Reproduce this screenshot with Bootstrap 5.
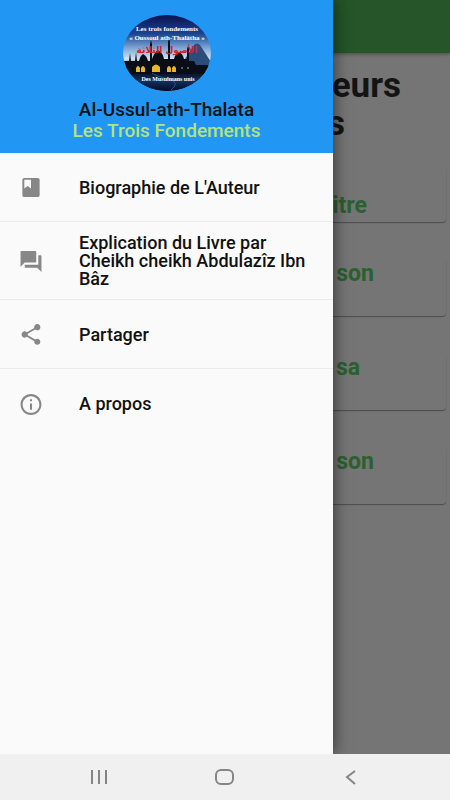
<!DOCTYPE html>
<html lang="fr">
<head>
<meta charset="utf-8">
<meta name="viewport" content="width=device-width, initial-scale=1">
<title>Les Trois Fondements</title>
<link href="https://cdn.jsdelivr.net/npm/bootstrap@5.3.0/dist/css/bootstrap.min.css" rel="stylesheet">
<style>
  body { font-family: Roboto, "Liberation Sans", sans-serif; color: #111; background: #f0f0f0; }
  .stage { background: #757575; }
  .app-bar { height: 53px; background: #255528; box-shadow: 0 1px 4px rgba(0,0,0,.4); }
  .page-title { font-size: 35px; line-height: 38px; font-weight: 700; color: #141414; padding: 14px 49px 0 0; }
  .page-title .second { padding-right: 56px; }
  .tile-list { display: grid; gap: 37px; padding: 22px 4px 0 4px; }
  .tile { height: 57px; border-radius: 4px; box-shadow: 0 1px 1px rgba(0,0,0,.35); font-size: 23px; line-height: 24px; font-weight: 700; color: #2b602f; padding: 3px 72px 0 0; }
  .tile.first { padding-top: 29px; padding-right: 79px; }
  .tile.narrow { padding-right: 86px; }
  .drawer { width: 74%; background: #fafafa; box-shadow: 0 0 16px rgba(0,0,0,.6); }
  .drawer-head { background: #2196f3; height: 153px; padding-top: 15px; font-size: 19px; line-height: 21px; font-weight: 500; }
  .drawer-head .sub { color: #b5e37c; }
  .avatar { width: 88px; height: 76px; margin-bottom: 8px; }
  .entry { min-height: 69px; padding: 12px 20px 11px 19px; gap: 36px; border-bottom: 1px solid #ebebeb; color: #111; font-size: 18px; line-height: 18px; font-weight: 500; }
  .entry:last-child { border-bottom: 0; }
  .entry svg { width: 24px; height: 23px; fill: #878787; }
  .sys-bar { height: 46px; background: #f0f0f0; padding: 0 36px; }
  .sys-bar svg { width: 24px; height: 24px; fill: none; stroke: #858585; stroke-width: 2; }
</style>
</head>
<body>
<div class="d-flex flex-column vh-100">
  <div class="stage flex-grow-1 position-relative overflow-hidden">
    <header class="app-bar"></header>
    <main class="text-end">
      <h1 class="page-title m-0">eurs<div class="second">s</div></h1>
      <div class="tile-list">
        <div class="tile first">itre</div>
        <div class="tile">son</div>
        <div class="tile narrow">sa</div>
        <div class="tile">son</div>
      </div>
    </main>
    <aside class="drawer position-absolute top-0 start-0 h-100">
      <div class="drawer-head d-flex flex-column align-items-center">
        <svg class="avatar" viewBox="0 0 88 76" aria-hidden="true">
          <defs>
            <linearGradient id="sky" x1="0" y1="0" x2="0" y2="1">
              <stop offset="0" stop-color="#0a1250"/><stop offset=".25" stop-color="#1c4590"/>
              <stop offset=".45" stop-color="#86aedb"/><stop offset=".58" stop-color="#d4e2ee"/>
              <stop offset=".72" stop-color="#234"/><stop offset="1" stop-color="#08102c"/>
            </linearGradient>
            <linearGradient id="ground" x1="0" y1="0" x2="0" y2="1">
              <stop offset="0" stop-color="#080c14"/><stop offset=".5" stop-color="#12305f"/>
              <stop offset="1" stop-color="#060a24"/>
            </linearGradient>
            <clipPath id="oval"><ellipse cx="44" cy="38" rx="44" ry="38"/></clipPath>
          </defs>
          <g clip-path="url(#oval)">
            <rect width="88" height="76" fill="url(#sky)"/>
            <path d="M58 50l13-20q3-3 6 0l13 20z" fill="#2b4d7c"/>
            <rect y="56" width="88" height="20" fill="url(#ground)"/>
            <path d="M0 46h6l1-8 1 8h4l1-9 1 9h2q1-5 4-7 4 2 5 7h2V29l1-4 1 4v15q2-6 6-9 5 3 6 9h4V27l1-4 1 4v17h4q1-5 5-7 4 2 5 7h3V34l1-3 1 3v12h5l2 4h16v9H0z" fill="#080d16"/>
            <path d="M13 57v-4q2-4 4 0v4zM18 57v-4q2-4 4 0v4zM29 57v-5q4-5 8 0v5zM44 57v-4q2-4 4 0v4zM49 57v-4q2-4 4 0v4z" fill="#e8b52c"/>
            <path d="M58 53h2M64 53h2" stroke="#a6a99b"/>
            <path d="M48 75q10-8-3-11t-16-6" fill="none" stroke="#2a568f" stroke-width="1"/>
          </g>
          <g text-anchor="middle" fill="#fff" font-family="Liberation Serif, serif" font-weight="700">
            <text x="44" y="16" font-size="7">Les trois fondements</text>
            <text x="44" y="25" font-size="7">« Oussoul ath-Thalâtha »</text>
            <text x="44" y="38" font-size="9" fill="#d0202c" font-family="DejaVu Sans, sans-serif">الأصول الثلاثة</text>
            <text x="45" y="66" font-size="6">Des Musulmans unis</text>
          </g>
        </svg>
        <div>Al-Ussul-ath-Thalata</div>
        <div class="sub">Les Trois Fondements</div>
      </div>
      <nav class="d-flex flex-column">
        <a href="#" class="entry d-flex align-items-center text-decoration-none"><svg class="flex-shrink-0" viewBox="0 0 24 24"><path fill-rule="evenodd" d="M5 2h14a2 2 0 0 1 2 2v16a2 2 0 0 1-2 2H5a2 2 0 0 1-2-2V4a2 2 0 0 1 2-2zM5 4v9l3.500-2.500L12 13V4z"/></svg><span>Biographie de L'Auteur</span></a>
        <a href="#" class="entry d-flex align-items-center text-decoration-none"><svg class="flex-shrink-0" viewBox="1 1 22 22"><path d="M21 6h-2v9H6v2c0 .55.45 1 1 1h11l4 4V7c0-.55-.45-1-1-1zm-4 6V3c0-.55-.45-1-1-1H3c-.55 0-1 .45-1 1v14l4-4h10c.55 0 1-.45 1-1z"/></svg><span>Explication du Livre par Cheikh cheikh Abdulazîz Ibn Bâz</span></a>
        <a href="#" class="entry d-flex align-items-center text-decoration-none"><svg class="flex-shrink-0" viewBox="1 1 22 22"><path d="M18 16.080c-.76 0-1.440.3-1.960.77L8.910 12.700c.05-.23.09-.46.09-.7s-.04-.47-.09-.7l7.050-4.110c.54.5 1.250.81 2.040.81 1.660 0 3-1.340 3-3s-1.340-3-3-3-3 1.340-3 3c0 .24.04.47.09.7L8.040 9.810C7.500 9.310 6.790 9 6 9c-1.660 0-3 1.340-3 3s1.340 3 3 3c.79 0 1.500-.31 2.040-.81l7.120 4.160c-.05.21-.08.43-.08.65 0 1.610 1.310 2.920 2.920 2.920s2.920-1.310 2.920-2.920-1.310-2.920-2.920-2.920z"/></svg><span>Partager</span></a>
        <a href="#" class="entry d-flex align-items-center text-decoration-none"><svg class="flex-shrink-0" viewBox="1 1 22 22"><path d="M11 7h2v2h-2zm0 4h2v6h-2zm1-9C6.480 2 2 6.480 2 12s4.480 10 10 10 10-4.480 10-10S17.520 2 12 2zm0 18c-4.410 0-8-3.590-8-8s3.590-8 8-8 8 3.590 8 8-3.590 8-8 8z"/></svg><span>A propos</span></a>
      </nav>
    </aside>
  </div>
  <div class="sys-bar d-flex align-items-center justify-content-around flex-shrink-0">
    <button class="btn p-0 border-0 d-flex" aria-label="Applications récentes"><svg viewBox="0 0 24 24"><path d="M5 5v14M12 5v14M19 5v14"/></svg></button>
    <button class="btn p-0 border-0 d-flex" aria-label="Accueil"><svg viewBox="0 0 24 24"><rect x="3" y="5" width="17" height="14" rx="5"/></svg></button>
    <button class="btn p-0 border-0 d-flex" aria-label="Retour"><svg viewBox="0 0 24 24"><path d="M16 6l-8 6 8 7"/></svg></button>
  </div>
</div>
<script src="https://cdn.jsdelivr.net/npm/bootstrap@5.3.0/dist/js/bootstrap.bundle.min.js"></script>
</body>
</html>
